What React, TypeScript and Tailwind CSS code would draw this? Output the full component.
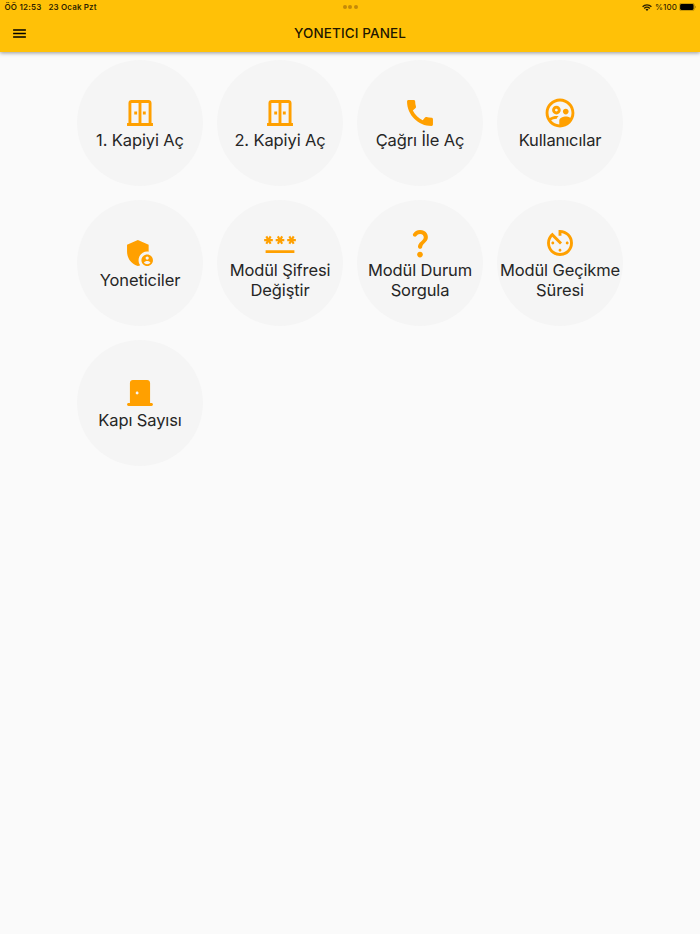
import type { ComponentType } from "react";
import {
  MdAdminPanelSettings,
  MdAvTimer,
  MdCall,
  MdMenu,
  MdOutlineSupervisedUserCircle,
  MdPassword,
} from "react-icons/md";

type IconProps = { className?: string };

type Action = {
  lines: string[];
  icon: ComponentType<IconProps>;
};

const ACTIONS: Action[] = [
  { lines: ["1. Kapiyi Aç"], icon: SlidingDoorIcon },
  { lines: ["2. Kapiyi Aç"], icon: SlidingDoorIcon },
  { lines: ["Çağrı İle Aç"], icon: MdCall },
  { lines: ["Kullanıcılar"], icon: MdOutlineSupervisedUserCircle },
  { lines: ["Yoneticiler"], icon: MdAdminPanelSettings },
  { lines: ["Modül Şifresi", "Değiştir"], icon: MdPassword },
  { lines: ["Modül Durum", "Sorgula"], icon: QuestionIcon },
  { lines: ["Modül Geçikme", "Süresi"], icon: MdAvTimer },
  { lines: ["Kapı Sayısı"], icon: DoorIcon },
];

export default function App() {
  return (
    <div className="flex h-screen w-full flex-col overflow-hidden bg-[#fafafa] font-['Inter','Noto_Sans',sans-serif]">
      <header className="z-10 flex h-[52px] shrink-0 flex-col bg-[#ffc107] text-black shadow-[0_1px_4px_rgba(0,0,0,0.4)]">
        <StatusBar />
        <TopBar />
      </header>
      <main className="grid grid-cols-4 gap-3.5 px-[77px] pt-[7.5px]">
        {ACTIONS.map((action) => (
          <ActionButton key={action.lines.join(" ")} action={action} />
        ))}
      </main>
    </div>
  );
}

function StatusBar() {
  return (
    <div className="grid h-3.5 grid-cols-3 items-center pl-[4.5px] pr-1 text-[8px] font-semibold leading-[14px] text-black/85">
      <div className="flex gap-[7px] whitespace-nowrap">
        <span className="tracking-[0.2px]">ÖÖ 12:53</span>
        <span className="tracking-[0.15px]">23 Ocak Pzt</span>
      </div>
      <div className="flex justify-center gap-[1.6px]">
        <span className="size-[3.8px] rounded-full bg-[#c48a08]" />
        <span className="size-[3.8px] rounded-full bg-[#c48a08]" />
        <span className="size-[3.8px] rounded-full bg-[#c48a08]" />
      </div>
      <div className="flex items-center justify-end">
        <WifiIcon className="mr-[3px] h-[7px] w-[10px]" />
        <span className="font-medium tracking-[0.1px]">%100</span>
        <BatteryIcon className="ml-0.5 h-2 w-[17px]" />
      </div>
    </div>
  );
}

function TopBar() {
  return (
    <div className="grid h-[38px] grid-cols-[39px_1fr_39px] items-center">
      <button type="button" aria-label="Menü" className="flex justify-center">
        <MdMenu className="size-[17px]" />
      </button>
      <h1 className="text-center text-[13.5px] font-medium tracking-[0.12px] text-black/90">YONETICI PANEL</h1>
    </div>
  );
}

function ActionButton({ action }: { action: Action }) {
  const Icon = action.icon;
  return (
    <button
      type="button"
      className="flex size-[126px] flex-col items-center justify-center rounded-full bg-[#f5f5f5]"
    >
      <Icon className="-my-px size-9 shrink-0 scale-96 text-[#ffa000]" />
      <span className="text-[16.5px] leading-5 tracking-[-0.12px] whitespace-nowrap text-[#262626]">
        {action.lines.map((line) => (
          <span key={line} className="block">
            {line}
          </span>
        ))}
      </span>
    </button>
  );
}

function SlidingDoorIcon({ className }: IconProps) {
  return (
    <svg viewBox="0 0 24 24" fill="currentColor" className={className}>
      <path
        fillRule="evenodd"
        d="M20 19V5c0-1.1-.9-2-2-2H6c-1.1 0-2 .9-2 2v14H3v2h18v-2h-1zM11 19H6V5h5v14zM18 19h-5V5h5v14z"
      />
      <path d="M8 11h2v2H8zM14 11h2v2h-2z" />
    </svg>
  );
}

function DoorIcon({ className }: IconProps) {
  return (
    <svg viewBox="0 0 24 24" fill="currentColor" className={className}>
      <path
        fillRule="evenodd"
        d="M20 19h-1V5c0-1.1-.9-2-2-2H7c-1.1 0-2 .9-2 2v14H4c-.55 0-1 .45-1 1s.45 1 1 1h16c.55 0 1-.45 1-1s-.45-1-1-1zM10 13c-.55 0-1-.45-1-1s.45-1 1-1 1 .45 1 1-.45 1-1 1z"
      />
    </svg>
  );
}

function QuestionIcon({ className }: IconProps) {
  return (
    <svg viewBox="0 0 24 24" fill="currentColor" className={className}>
      <path d="M7.92 7.54c-.8-.34-1.14-1.33-.66-2.05C8.23 4.05 9.85 3 11.99 3c2.35 0 3.96 1.07 4.78 2.41.7 1.15 1.11 3.3.03 4.9-1.2 1.77-2.35 2.31-2.97 3.45-.15.27-.24.49-.3.94-.09.73-.69 1.3-1.43 1.3-.87 0-1.58-.75-1.48-1.62.06-.51.18-1.04.46-1.54.77-1.39 2.25-2.21 3.11-3.44.91-1.29.4-3.7-2.18-3.7-1.17 0-1.93.61-2.4 1.34-.35.57-1.08.75-1.69.5zM14 20c0 1.1-.9 2-2 2s-2-.9-2-2 .9-2 2-2 2 .9 2 2z" />
    </svg>
  );
}

function WifiIcon({ className }: IconProps) {
  return (
    <svg viewBox="0 0 20 14" fill="none" stroke="currentColor" strokeWidth="2.8" className={className}>
      <path d="M1.2 5.4a12.6 12.6 0 0 1 17.6 0M4.5 8.8a7.9 7.9 0 0 1 11 0" />
      <path d="M10 14 7.1 11a4.2 4.2 0 0 1 5.8 0z" fill="currentColor" stroke="none" />
    </svg>
  );
}

function BatteryIcon({ className }: IconProps) {
  return (
    <svg viewBox="0 0 17 8" className={className}>
      <rect x="0.35" y="0.35" width="15" height="7.3" rx="2" fill="none" stroke="#000" strokeOpacity="0.4" strokeWidth="0.6" />
      <rect x="1.1" y="1.1" width="13.5" height="5.8" rx="1.3" fill="#000" />
      <path d="M16.1 2.8c.9.4.9 2 0 2.4z" fill="#000" fillOpacity="0.45" />
    </svg>
  );
}
